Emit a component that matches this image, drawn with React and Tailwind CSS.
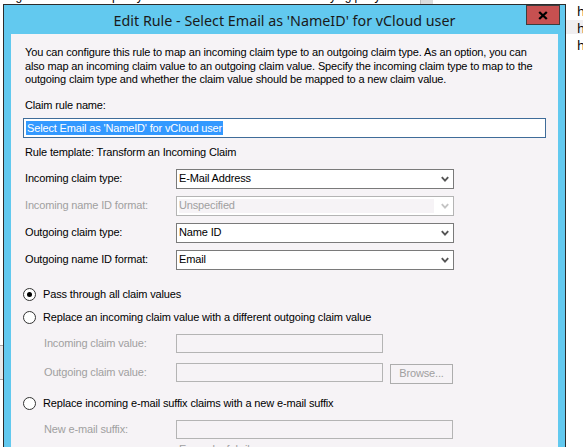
import React from "react";

const FONT = { fontFamily: '"Liberation Sans", Arial, sans-serif' };

function Chevron({ color }) {
  return (
    <svg width="8" height="6" viewBox="0 0 8 6">
      <path d="M0.8 1.2 L4 4.6 L7.2 1.2" fill="none" stroke={color} strokeWidth="1.9" />
    </svg>
  );
}

function Select({ value }) {
  return (
    <div className="flex items-center h-[20px] w-[278px] border border-[#7a7a7a] bg-white pl-[2px] pr-[4px]">
      <span className="flex-1 text-black">{value}</span>
      <Chevron color="#555555" />
    </div>
  );
}

function DisabledSelect({ value }) {
  return (
    <div className="flex items-center h-[20px] w-[278px] border border-[#b4b4b4] bg-white pl-[2px] pr-[4px]">
      <span className="h-[14px] w-[255px] bg-[#f6f3f6] flex items-center text-[#a0a0a0]">{value}</span>
      <span className="flex-1" />
      <Chevron color="#c4c4c4" />
    </div>
  );
}

function Radio({ checked }) {
  return (
    <span className="w-[13px] h-[13px] shrink-0 rounded-full border border-[#333333] bg-white flex items-center justify-center">
      {checked && <span className="w-[5px] h-[5px] rounded-full bg-black" />}
    </span>
  );
}

function Row({ label, children, disabled }) {
  return (
    <div className="flex items-center h-[20px]">
      <span className={disabled ? "w-[151px] text-[#a0a0a0]" : "w-[151px] text-black"}>{label}</span>
      {children}
    </div>
  );
}

export default function App() {
  return (
    <div className="relative w-[583px] h-[447px] bg-white overflow-hidden text-[11px] leading-[13px] tracking-[-0.15px]" style={FONT}>
      {/* background page */}
      <div className="absolute left-[-2px] top-[-10px] whitespace-nowrap text-[12px] text-black">
        wing transform rules specify the claims that will be sent to the relying party.
      </div>
      <div className="absolute left-[420px] top-0 w-[13px] h-[5px] bg-[#dcdcdc] border-l border-[#bdbdbd]" />
      <div className="absolute left-[566px] top-[20px] w-[17px] h-[14px] bg-[#f0eef0]" />
      <div className="absolute left-[577px] top-[3px] flex flex-col text-[13px] leading-[17px] text-black" style={{ fontFamily: '"Noto Sans", sans-serif' }}>
        <span>h</span>
        <span>h</span>
        <span>h</span>
      </div>
      <div className="absolute left-0 top-[345px] w-[3px] h-[35px] bg-[#e9e9e9] border-y border-[#a9a9a9]" />

      {/* dialog window */}
      <div className="absolute left-[3px] top-[4px] w-[563px] h-[460px] border border-[#2c2c2c] bg-[#62c9ef] flex flex-col px-[7px]">
        <div className="relative h-[29px] shrink-0 flex items-center justify-center">
          <span className="text-[14.3px] tracking-normal text-[#1a1a1a] mt-[1px]" style={{ fontFamily: '"Noto Sans", "Open Sans", sans-serif' }}>
            Edit Rule - Select Email as 'NameID' for vCloud user
          </span>
          <div className="absolute right-[-2px] top-0 w-[34px] h-[20px] bg-[#c75050] border border-[#3d3d3d] flex items-center justify-center">
            <svg width="10" height="9" viewBox="0 0 10 9">
              <path d="M1.2 1 L8.8 8 M8.8 1 L1.2 8" stroke="#000" strokeWidth="2.3" />
            </svg>
          </div>
        </div>

        {/* client area */}
        <div className="flex-1 bg-[#f6f3f6] flex flex-col pl-[12px]">
          <div className="mt-[12px] pl-[2px] leading-[13.5px] whitespace-nowrap text-black">
            You can configure this rule to map an incoming claim type to an outgoing claim type. As an option, you can
            <br />
            also map an incoming claim value to an outgoing claim value. Specify the incoming claim type to map to the
            <br />
            outgoing claim type and whether the claim value should be mapped to a new claim value.
          </div>

          <div className="mt-[12px] pl-[2px] h-[13px]">Claim rule name:</div>
          <div className="mt-[6px] h-[20px] w-[523px] border border-[#3f6c99] bg-white flex items-center pl-[2px]">
            <span className="bg-[#3399ff] text-white leading-[14px] px-px">Select Email as 'NameID' for vCloud user</span>
          </div>

          <div className="mt-[8px] pl-[2px] h-[13px]">Rule template: Transform an Incoming Claim</div>

          <div className="mt-[10px] pl-[2px] flex flex-col gap-[7px]">
            <Row label="Incoming claim type:">
              <Select value="E-Mail Address" />
            </Row>
            <Row label="Incoming name ID format:" disabled>
              <DisabledSelect value="Unspecified" />
            </Row>
            <Row label="Outgoing claim type:">
              <Select value="Name ID" />
            </Row>
            <Row label="Outgoing name ID format:">
              <Select value="Email" />
            </Row>
          </div>

          <div className="mt-[18px] flex items-center h-[13px]">
            <Radio checked />
            <span className="ml-[7px]">Pass through all claim values</span>
          </div>
          <div className="mt-[10px] flex items-center h-[13px]">
            <Radio />
            <span className="ml-[7px]">Replace an incoming claim value with a different outgoing claim value</span>
          </div>

          <div className="mt-[10px] flex items-center h-[19px]">
            <span className="w-[153px] pl-[21px] text-[#a0a0a0]">Incoming claim value:</span>
            <div className="w-[207px] h-[19px] border border-[#b4b4b4]" />
          </div>
          <div className="mt-[10px] flex items-start h-[21px]">
            <span className="w-[153px] pl-[21px] text-[#a0a0a0] h-[19px] flex items-center">Outgoing claim value:</span>
            <div className="w-[207px] h-[19px] border border-[#b4b4b4]" />
            <div className="ml-[7px] mt-px w-[63px] h-[20px] border border-[#adadad] flex items-center justify-center text-[#a0a0a0]">
              Browse...
            </div>
          </div>

          <div className="mt-[13px] flex items-center h-[13px]">
            <Radio />
            <span className="ml-[7px]">Replace incoming e-mail suffix claims with a new e-mail suffix</span>
          </div>

          <div className="mt-[10px] flex items-center h-[19px]">
            <span className="w-[153px] pl-[21px] text-[#a0a0a0]">New e-mail suffix:</span>
            <div className="w-[277px] h-[19px] border border-[#b4b4b4]" />
          </div>
          <div className="mt-[4px] pl-[156px] text-[#a0a0a0]">Example: fabrikam.com</div>
        </div>
      </div>
    </div>
  );
}
